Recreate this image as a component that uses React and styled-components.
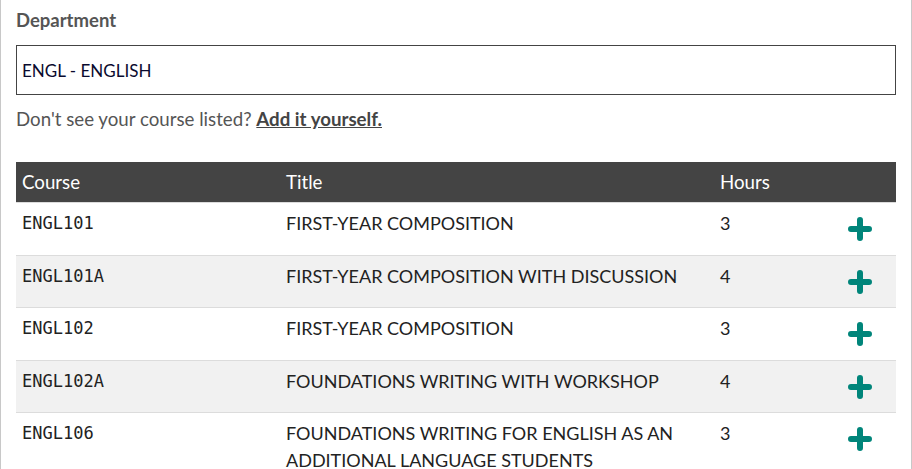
import React from "react";
import styled, { createGlobalStyle } from "styled-components";

const Global = createGlobalStyle`
  html, body { margin: 0; padding: 0; background: #fff; }
  body { font-family: Lato, "Liberation Sans", sans-serif; }
`;

const Page = styled.div`
  width: 912px;
  height: 469px;
  box-sizing: border-box;
  border-left: 1px solid #c8c8c8;
  border-right: 1px solid #c8c8c8;
  padding: 8px 15px 0;
  overflow: hidden;
`;

const Label = styled.div`
  font-size: 18.5px;
  line-height: 25px;
  font-weight: 700;
  color: #555;
  margin-bottom: 12px;
`;

const Field = styled.div`
  height: 50px;
  box-sizing: border-box;
  border: 1px solid #444;
  display: flex;
  align-items: center;
  padding: 0 5px;
  font-size: 17px;
  color: #0a0a2e;
`;

const Help = styled.p`
  margin: 12px 0 31px;
  font-size: 18.7px;
  line-height: 24px;
  color: #555;
`;

const AddLink = styled.a`
  font-weight: 700;
  color: #444;
  text-decoration: underline;
`;

const Table = styled.table`
  width: 100%;
  table-layout: fixed;
  border-collapse: collapse;
  font-size: 18px;
`;

const HeadRow = styled.tr`
  background: #444;
`;

const Th = styled.th`
  height: 40px;
  padding: 0 6px;
  text-align: left;
  font-weight: 400;
  font-size: 18.7px;
  color: #fff;
  vertical-align: middle;
`;

const Row = styled.tr`
  background: ${(p) => (p.$alt ? "#f1f1f1" : "#fff")};
  border-top: 1px solid #dcdcdc;
`;

const Td = styled.td`
  padding: 7px 6px;
  vertical-align: top;
  line-height: 27px;
  color: #222;
  font-family: ${(p) => (p.$mono ? '"DejaVu Sans Mono", monospace' : "inherit")};
  font-size: ${(p) => (p.$mono ? "17px" : "18px")};
`;

const ActionCell = styled.td`
  padding: 7px 6px 6px;
  vertical-align: top;
  text-align: center;
`;

const AddButton = styled.button`
  height: 38.5px;
  width: 40px;
  border: 0;
  background: transparent;
  padding: 0;
  display: inline-flex;
  align-items: center;
  justify-content: center;
  cursor: pointer;
`;

const PlusIcon = () => (
  <svg width="24" height="24" viewBox="0 0 24 24">
    <path d="M12 3v18M3 12h18" stroke="#00857a" strokeWidth="6" strokeLinecap="round" fill="none" />
  </svg>
);

const courses = [
  ["ENGL101", "FIRST-YEAR COMPOSITION", "3"],
  ["ENGL101A", "FIRST-YEAR COMPOSITION WITH DISCUSSION", "4"],
  ["ENGL102", "FIRST-YEAR COMPOSITION", "3"],
  ["ENGL102A", "FOUNDATIONS WRITING WITH WORKSHOP", "4"],
  ["ENGL106", "FOUNDATIONS WRITING FOR ENGLISH AS AN ADDITIONAL LANGUAGE STUDENTS", "3"],
];

export default function App() {
  return (
    <>
      <Global />
      <Page>
        <Label>Department</Label>
        <Field>ENGL - ENGLISH</Field>
        <Help>
          Don't see your course listed? <AddLink href="#">Add it yourself.</AddLink>
        </Help>
        <Table>
          <colgroup>
            <col style={{ width: "264px" }} />
            <col style={{ width: "434px" }} />
            <col style={{ width: "110px" }} />
            <col />
          </colgroup>
          <thead>
            <HeadRow>
              <Th>Course</Th>
              <Th>Title</Th>
              <Th>Hours</Th>
              <Th />
            </HeadRow>
          </thead>
          <tbody>
            {courses.map(([code, title, hours], i) => (
              <Row key={code} $alt={i % 2 === 1}>
                <Td $mono>{code}</Td>
                <Td>{title}</Td>
                <Td>{hours}</Td>
                <ActionCell>
                  <AddButton aria-label={`Add ${code}`}>
                    <PlusIcon />
                  </AddButton>
                </ActionCell>
              </Row>
            ))}
          </tbody>
        </Table>
      </Page>
    </>
  );
}
